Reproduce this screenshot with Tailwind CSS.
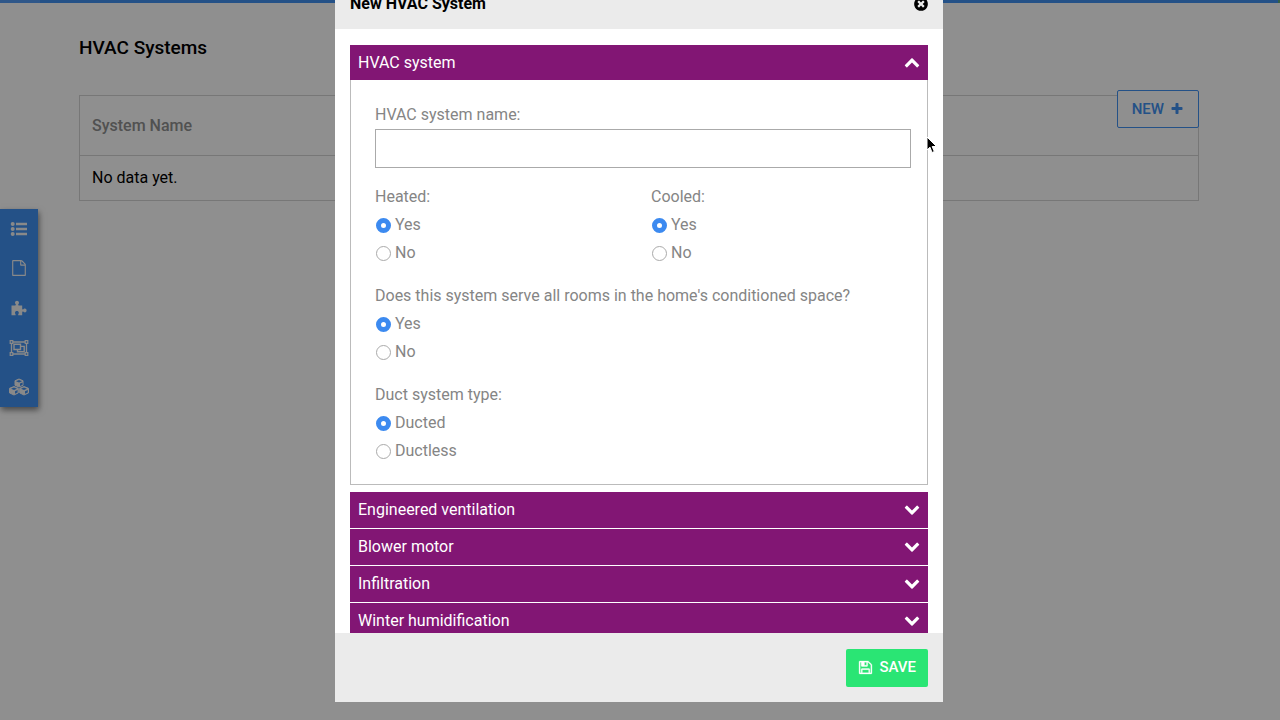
<!DOCTYPE html>
<html lang="en">
<head>
    <meta charset="UTF-8">
    <meta name="viewport" content="width=device-width, initial-scale=1.0">
    <title>HVAC Systems</title>
    <script src="https://cdn.jsdelivr.net/npm/@tailwindcss/browser@4"></script>
</head>
<body class="relative h-screen overflow-hidden bg-white font-['Roboto',sans-serif] text-base text-black">
    <div class="flex h-[3px] justify-between bg-[#4090f0]">
        <div class="w-10 bg-[#549cf4]"></div>
        <div class="w-0.5 bg-[#5fae7c]"></div>
    </div>

    <!-- Side menu -->
    <nav class="absolute left-0 top-[209px] flex h-[198px] w-[38px] flex-col bg-[#4090f0] text-[#f4f4f4] shadow-[1px_3px_6px_rgba(0,0,0,0.5)]">
        <a href="#" aria-label="List" class="flex flex-1 items-center justify-center">
            <svg class="size-[18px]" viewBox="0 0 18 18" fill="currentColor"><circle cx="2.700" cy="4" r="2"/><circle cx="2.700" cy="9" r="2"/><circle cx="2.700" cy="14" r="2"/><path d="M6 2.700h11v2.600H6zM6 7.700h11v2.600H6zM6 12.700h11v2.600H6z"/></svg>
        </a>
        <a href="#" aria-label="File" class="flex flex-1 items-center justify-center">
            <svg class="size-4" viewBox="0 0 1792 1792" fill="currentColor"><path d="M1596 380q28 28 48 76t20 88v1152q0 40-28 68t-68 28h-1344q-40 0-68-28t-28-68v-1600q0-40 28-68t68-28h896q40 0 88 20t76 48zm-444-244v376h376q-10-29-22-41l-313-313q-12-12-41-22zm384 1528v-1024h-416q-40 0-68-28t-28-68v-416h-768v1536h1280z"/></svg>
        </a>
        <a href="#" aria-label="Components" class="flex flex-1 items-center justify-center">
            <svg class="size-4" viewBox="0 0 16 16" fill="currentColor"><path d="M.5 5.500h3.600c.6 0 .9-.4.7-.9C4.500 4 4 3.500 4 2.700 4 1.500 4.900.7 6 .7s2 .8 2 2c0 .8-.5 1.300-.8 1.900-.2.5.1.9.7.9h3.300v3.200c0 .6.4.9.9.7.6-.3 1-.8 1.800-.8 1 0 1.700.8 1.700 1.900s-.7 1.900-1.700 1.900c-.8 0-1.200-.5-1.800-.8-.5-.2-.9.1-.9.7v3H7.800c-.6 0-.8-.4-.6-.9.2-.5.6-.9.6-1.600 0-1-.8-1.700-1.900-1.700s-1.900.7-1.900 1.700c0 .7.4 1.100.6 1.600.2.5 0 .9-.6.9H.5z"/></svg>
        </a>
        <a href="#" aria-label="Groups" class="flex flex-1 items-center justify-center">
            <svg class="h-4 w-5" viewBox="0 0 20 16" fill="none" stroke="currentColor"><path d="M4 2h12M4 14h12M2.500 3.500v9M17.500 3.500v9" stroke-width="1.300"/><path d="M1.200.700h2.600v2.600H1.200zM16.200.700h2.600v2.600h-2.600zM1.200 12.700h2.600v2.600H1.200zM16.200 12.700h2.600v2.600h-2.600z" stroke-width="1.200"/><path d="M5 4.300h6.500v5.200H5zM8.500 9.500v2.300h6.700V6.400h-3.700" stroke-width="1.400"/></svg>
        </a>
        <a href="#" aria-label="Blocks" class="flex flex-1 items-center justify-center">
            <svg class="h-[18px] w-[22px]" viewBox="0 0 22 18"><g fill="currentColor" stroke="currentColor" stroke-linejoin="round"><path d="M11 1l4 1.700v4.600L11 9 7 7.300V2.700zM6 8.500l4.300 1.800v4.600L6 17l-4.500-2.100v-4.600zM16 8.500l4.500 1.800v4.600L16 17l-4.300-2.100v-4.600z"/></g><path d="M8 3.200l3 1.300 3-1.300-3-1.200zM12 5.500l2.600-1.100v2.400L12 7.900zM3 10.700l3 1.300 3-1.300-3-1.200zM7 13.200l2.600-1.100v2.400L7 15.800zM13 10.700l3 1.300 3-1.300-3-1.200zM17 13.200l2.800-1.200v2.500L17 15.800z" fill="#4090f0"/></svg>
        </a>
    </nav>

    <main class="relative pt-[31px] pr-[81px] pl-[79px]">
        <h1 class="text-[19px] leading-7 font-medium">HVAC Systems</h1>
        <div class="relative mt-[33px]">
            <table class="w-full border-collapse border border-[#d4d4d4] text-left">
                <thead>
                    <tr class="h-[60px] border-b border-[#d4d4d4]"><th class="px-3 font-medium text-[#909090]">System Name</th></tr>
                </thead>
                <tbody>
                    <tr class="h-[45px]"><td class="px-3">No data yet.</td></tr>
                </tbody>
            </table>
            <button type="button" class="absolute -top-[5px] right-0 flex h-[38px] items-center gap-1.5 rounded-xs border border-[#4090f0] bg-white px-[14px] text-[15px] font-medium text-[#4090f0]">
                NEW
                <svg class="size-[14px]" viewBox="0 0 1792 1792" fill="currentColor"><path d="M1600 736v192q0 40-28 68t-68 28h-416v416q0 40-28 68t-68 28h-192q-40 0-68-28t-28-68v-416h-416q-40 0-68-28t-28-68v-192q0-40 28-68t68-28h416v-416q0-40 28-68t68-28h192q40 0 68 28t28 68v416h416q40 0 68 28t28 68z"/></svg>
            </button>
        </div>
    </main>

    <!-- Modal -->
    <div class="fixed inset-0 flex justify-center bg-black/44 pr-0.5 pb-[18px]">
        <div role="dialog" aria-labelledby="modal-title" class="-mt-[21px] flex w-[608px] flex-col bg-white">
            <header class="flex h-[50px] shrink-0 items-center justify-between bg-[#ebebeb] pr-[14px] pl-[15px]">
                <h2 id="modal-title" class="font-bold">New HVAC System</h2>
                <button type="button" aria-label="Close">
                    <svg class="size-4" viewBox="0 0 1792 1792" fill="currentColor"><path d="M1277 1122q0-26-19-45l-181-181 181-181q19-19 19-45 0-27-19-46l-90-90q-19-19-46-19-26 0-45 19l-181 181-181-181q-19-19-45-19-27 0-46 19l-90 90q-19 19-19 46 0 26 19 45l181 181-181 181q-19 19-19 45 0 27 19 46l90 90q19 19 46 19 26 0 45-19l181-181 181 181q19 19 45 19 27 0 46-19l90-90q19-19 19-46zm387-226q0 209-103 385.500t-279.500 279.500-385.500 103-385.500-103-279.500-279.500-103-385.500 103-385.500 279.500-279.500 385.500-103 385.500 103 279.500 279.500 103 385.500z"/></svg>
                </button>
            </header>

            <form class="min-h-0 flex-1 overflow-hidden px-[15px] pt-4 text-[#858585]">
                <button type="button" class="flex h-[35px] w-full items-center justify-between bg-[#821674] px-2 text-white">
                    HVAC system
                    <svg class="size-4" viewBox="0 128 1792 1792" fill="currentColor"><path d="M1683 1331l-166 165q-19 19-45 19t-45-19l-531-531-531 531q-19 19-45 19t-45-19l-166-165q-19-19-19-45.500t19-45.500l742-741q19-19 45-19t45 19l742 741q19 19 19 45.500t-19 45.500z"/></svg>
                </button>
                <div class="flex flex-col gap-[15px] border border-t-0 border-[#bbbbbb] pt-[21px] pr-4 pb-[19px] pl-6">
                    <div>
                        <label for="system-name" class="block leading-7">HVAC system name:</label>
                        <input id="system-name" type="text" class="block h-[39px] w-full border border-[#aaaaaa] px-3 text-black">
                    </div>
                    <div class="grid grid-cols-2 gap-4">
                        <fieldset>
                            <legend class="leading-7">Heated:</legend>
                            <label class="flex h-7 items-center gap-1"><input type="radio" name="heated" checked class="ml-px size-[15px] appearance-none rounded-full border border-[#aaaaaa] checked:border-[5px] checked:border-[#3c8af0]">Yes</label>
                            <label class="flex h-7 items-center gap-1"><input type="radio" name="heated" class="ml-px size-[15px] appearance-none rounded-full border border-[#aaaaaa] checked:border-[5px] checked:border-[#3c8af0]">No</label>
                        </fieldset>
                        <fieldset>
                            <legend class="leading-7">Cooled:</legend>
                            <label class="flex h-7 items-center gap-1"><input type="radio" name="cooled" checked class="ml-px size-[15px] appearance-none rounded-full border border-[#aaaaaa] checked:border-[5px] checked:border-[#3c8af0]">Yes</label>
                            <label class="flex h-7 items-center gap-1"><input type="radio" name="cooled" class="ml-px size-[15px] appearance-none rounded-full border border-[#aaaaaa] checked:border-[5px] checked:border-[#3c8af0]">No</label>
                        </fieldset>
                    </div>
                    <fieldset>
                        <legend class="leading-7">Does this system serve all rooms in the home's conditioned space?</legend>
                        <label class="flex h-7 items-center gap-1"><input type="radio" name="all-rooms" checked class="ml-px size-[15px] appearance-none rounded-full border border-[#aaaaaa] checked:border-[5px] checked:border-[#3c8af0]">Yes</label>
                        <label class="flex h-7 items-center gap-1"><input type="radio" name="all-rooms" class="ml-px size-[15px] appearance-none rounded-full border border-[#aaaaaa] checked:border-[5px] checked:border-[#3c8af0]">No</label>
                    </fieldset>
                    <fieldset>
                        <legend class="leading-7">Duct system type:</legend>
                        <label class="flex h-7 items-center gap-1"><input type="radio" name="duct-type" checked class="ml-px size-[15px] appearance-none rounded-full border border-[#aaaaaa] checked:border-[5px] checked:border-[#3c8af0]">Ducted</label>
                        <label class="flex h-7 items-center gap-1"><input type="radio" name="duct-type" class="ml-px size-[15px] appearance-none rounded-full border border-[#aaaaaa] checked:border-[5px] checked:border-[#3c8af0]">Ductless</label>
                    </fieldset>
                </div>

                <div class="mt-[7px] flex flex-col gap-px text-white">
                    <button type="button" class="flex h-9 shrink-0 items-center justify-between bg-[#821674] px-2">
                        Engineered ventilation
                        <svg class="size-4" viewBox="0 128 1792 1792" fill="currentColor"><path d="M1683 808l-742 741q-19 19-45 19t-45-19l-742-741q-19-19-19-45.500t19-45.500l166-165q19-19 45-19t45 19l531 531 531-531q19-19 45-19t45 19l166 165q19 19 19 45.500t-19 45.500z"/></svg>
                    </button>
                    <button type="button" class="flex h-9 shrink-0 items-center justify-between bg-[#821674] px-2">
                        Blower motor
                        <svg class="size-4" viewBox="0 128 1792 1792" fill="currentColor"><path d="M1683 808l-742 741q-19 19-45 19t-45-19l-742-741q-19-19-19-45.500t19-45.500l166-165q19-19 45-19t45 19l531 531 531-531q19-19 45-19t45 19l166 165q19 19 19 45.500t-19 45.500z"/></svg>
                    </button>
                    <button type="button" class="flex h-9 shrink-0 items-center justify-between bg-[#821674] px-2">
                        Infiltration
                        <svg class="size-4" viewBox="0 128 1792 1792" fill="currentColor"><path d="M1683 808l-742 741q-19 19-45 19t-45-19l-742-741q-19-19-19-45.500t19-45.500l166-165q19-19 45-19t45 19l531 531 531-531q19-19 45-19t45 19l166 165q19 19 19 45.500t-19 45.500z"/></svg>
                    </button>
                    <button type="button" class="flex h-9 shrink-0 items-center justify-between bg-[#821674] px-2">
                        Winter humidification
                        <svg class="size-4" viewBox="0 128 1792 1792" fill="currentColor"><path d="M1683 808l-742 741q-19 19-45 19t-45-19l-742-741q-19-19-19-45.500t19-45.500l166-165q19-19 45-19t45 19l531 531 531-531q19-19 45-19t45 19l166 165q19 19 19 45.500t-19 45.500z"/></svg>
                    </button>
                </div>
            </form>

            <footer class="flex h-[69px] shrink-0 items-center justify-end bg-[#ebebeb] px-[15px]">
                <button type="button" class="flex h-[38px] items-center gap-1.5 rounded-xs bg-[#2ae574] px-3 text-[15px] font-medium text-white">
                    <svg class="size-[15px]" viewBox="0 0 1792 1792" fill="currentColor" stroke="currentColor" stroke-width="40"><path d="M512 1536h768v-384h-768v384zm896 0h128v-896q0-14-10-38.500t-20-34.500l-281-281q-10-10-34-20t-39-10v416q0 40-28 68t-68 28h-576q-40 0-68-28t-28-68v-416h-128v1280h128v-416q0-40 28-68t68-28h832q40 0 68 28t28 68v416zm-384-928v-320q0-13-9.500-22.500t-22.500-9.500h-192q-13 0-22.500 9.500t-9.500 22.500v320q0 13 9.500 22.500t22.500 9.500h192q13 0 22.500-9.500t9.500-22.500zm640 32v928q0 40-28 68t-68 28h-1344q-40 0-68-28t-28-68v-1344q0-40 28-68t68-28h928q40 0 88 20t76 48l280 280q28 28 48 76t20 88z"/></svg>
                    SAVE
                </button>
            </footer>
        </div>
    </div>

    <!-- Mouse pointer -->
    <svg class="pointer-events-none fixed top-[136px] left-[926px] h-[18px] w-3" viewBox="0 0 12 18"><path d="M1 1v13l3-2.800L6 16.500l2.300-1L6.200 10.500h4.300z" fill="#000" stroke="#fff"/></svg>
</body>
</html>
